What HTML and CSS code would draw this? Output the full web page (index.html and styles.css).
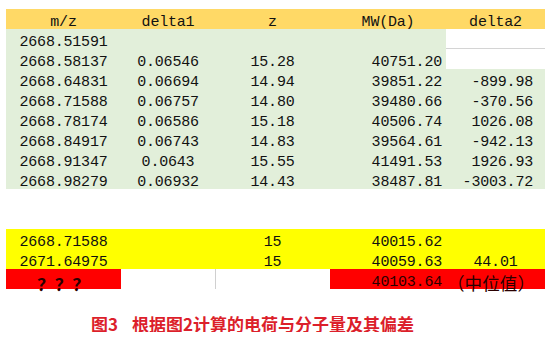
FILE: index.html
```html
<!DOCTYPE html>
<html lang="zh">
<head>
<meta charset="utf-8">
<title>图3</title>
<link rel="stylesheet" href="styles.css">
</head>
<body>
<div class="page">
  <div class="sheet">
    <div class="c hd">m/z</div><div class="c hd">delta1</div><div class="c hd">z</div><div class="c hd">MW(Da)</div><div class="c hd">delta2</div>

    <div class="c g ctr">2668.51591</div><div class="c g"></div><div class="c g"></div><div class="c g"></div><div class="c w line-b"></div>
    <div class="c g ctr">2668.58137</div><div class="c g ctr">0.06546</div><div class="c g ctr">15.28</div><div class="c g mw">40751.20</div><div class="c w"></div>
    <div class="c g ctr">2668.64831</div><div class="c g ctr">0.06694</div><div class="c g ctr">14.94</div><div class="c g mw">39851.22</div><div class="c g d2">-899.98</div>
    <div class="c g ctr">2668.71588</div><div class="c g ctr">0.06757</div><div class="c g ctr">14.80</div><div class="c g mw">39480.66</div><div class="c g d2">-370.56</div>
    <div class="c g ctr">2668.78174</div><div class="c g ctr">0.06586</div><div class="c g ctr">15.18</div><div class="c g mw">40506.74</div><div class="c g d2">1026.08</div>
    <div class="c g ctr">2668.84917</div><div class="c g ctr">0.06743</div><div class="c g ctr">14.83</div><div class="c g mw">39564.61</div><div class="c g d2">-942.13</div>
    <div class="c g ctr">2668.91347</div><div class="c g ctr">0.0643</div><div class="c g ctr">15.55</div><div class="c g mw">41491.53</div><div class="c g d2">1926.93</div>
    <div class="c g ctr">2668.98279</div><div class="c g ctr">0.06932</div><div class="c g ctr">14.43</div><div class="c g mw">38487.81</div><div class="c g d2">-3003.72</div>

    <div class="c"></div><div class="c"></div><div class="c"></div><div class="c"></div><div class="c"></div>
    <div class="c"></div><div class="c"></div><div class="c"></div><div class="c"></div><div class="c"></div>

    <div class="c y ctr">2668.71588</div><div class="c y"></div><div class="c y ctr">15</div><div class="c y mw">40015.62</div><div class="c y"></div>
    <div class="c y ctr">2671.64975</div><div class="c y"></div><div class="c y ctr">15</div><div class="c y mw">40059.63</div><div class="c y ctr">44.01</div>
    <div class="c r ctr"><span class="fw q">？？？</span></div><div class="c"></div><div class="c line-l"></div><div class="c r mw">40103.64</div><div class="c r note"><span class="fw">（中位值）</span></div>
  </div>
  <p class="caption"><span class="fig">图3</span>根据图2计算的电荷与分子量及其偏差</p>
</div>
</body>
</html>
```

FILE: styles.css
```css
html, body {
  margin: 0;
  padding: 0;
  background: #ffffff;
}

.page {
  padding: 9px 0 0 6px;
}

.sheet {
  display: grid;
  grid-template-columns: 115px 94px 115px 116px 99px;
  grid-auto-rows: 20px;
  width: 539px;
  font-family: "Liberation Mono", "Noto Sans CJK SC", monospace;
  font-size: 15px;
  letter-spacing: -0.2px;
  color: #111111;
}

.c {
  box-sizing: border-box;
  height: 20px;
  padding-top: 6px;
  line-height: 16px;
  white-space: nowrap;
  overflow: visible;
}

.hd {
  background: #ffd966;
  text-align: center;
}

.g { background: #e2efda; }
.y { background: #ffff00; }
.r { background: #ff0000; color: #2a0000; }
.w { background: #ffffff; }

.ctr { text-align: center; }
.mw { text-align: right; padding-right: 4px; }
.d2 { text-align: right; padding-right: 12px; }

.line-b { border-bottom: 1px solid #d4d4d4; }
.line-l { border-left: 1px solid #d0d0d0; }

.fw {
  font-family: "Noto Sans CJK SC", sans-serif;
  font-size: 17.6px;
  letter-spacing: 0;
  line-height: 16px;
}

.q {
  font-weight: 700;
  position: relative;
  top: 1px;
}

.note {
  padding-left: 1px;
  text-align: left;
}

.caption {
  margin: 26px 0 0 85px;
  font-family: "Noto Sans CJK SC", sans-serif;
  font-weight: 700;
  font-size: 17px;
  line-height: 17px;
  color: #dc1f2b;
}

.fig {
  margin-right: 14px;
}
```
